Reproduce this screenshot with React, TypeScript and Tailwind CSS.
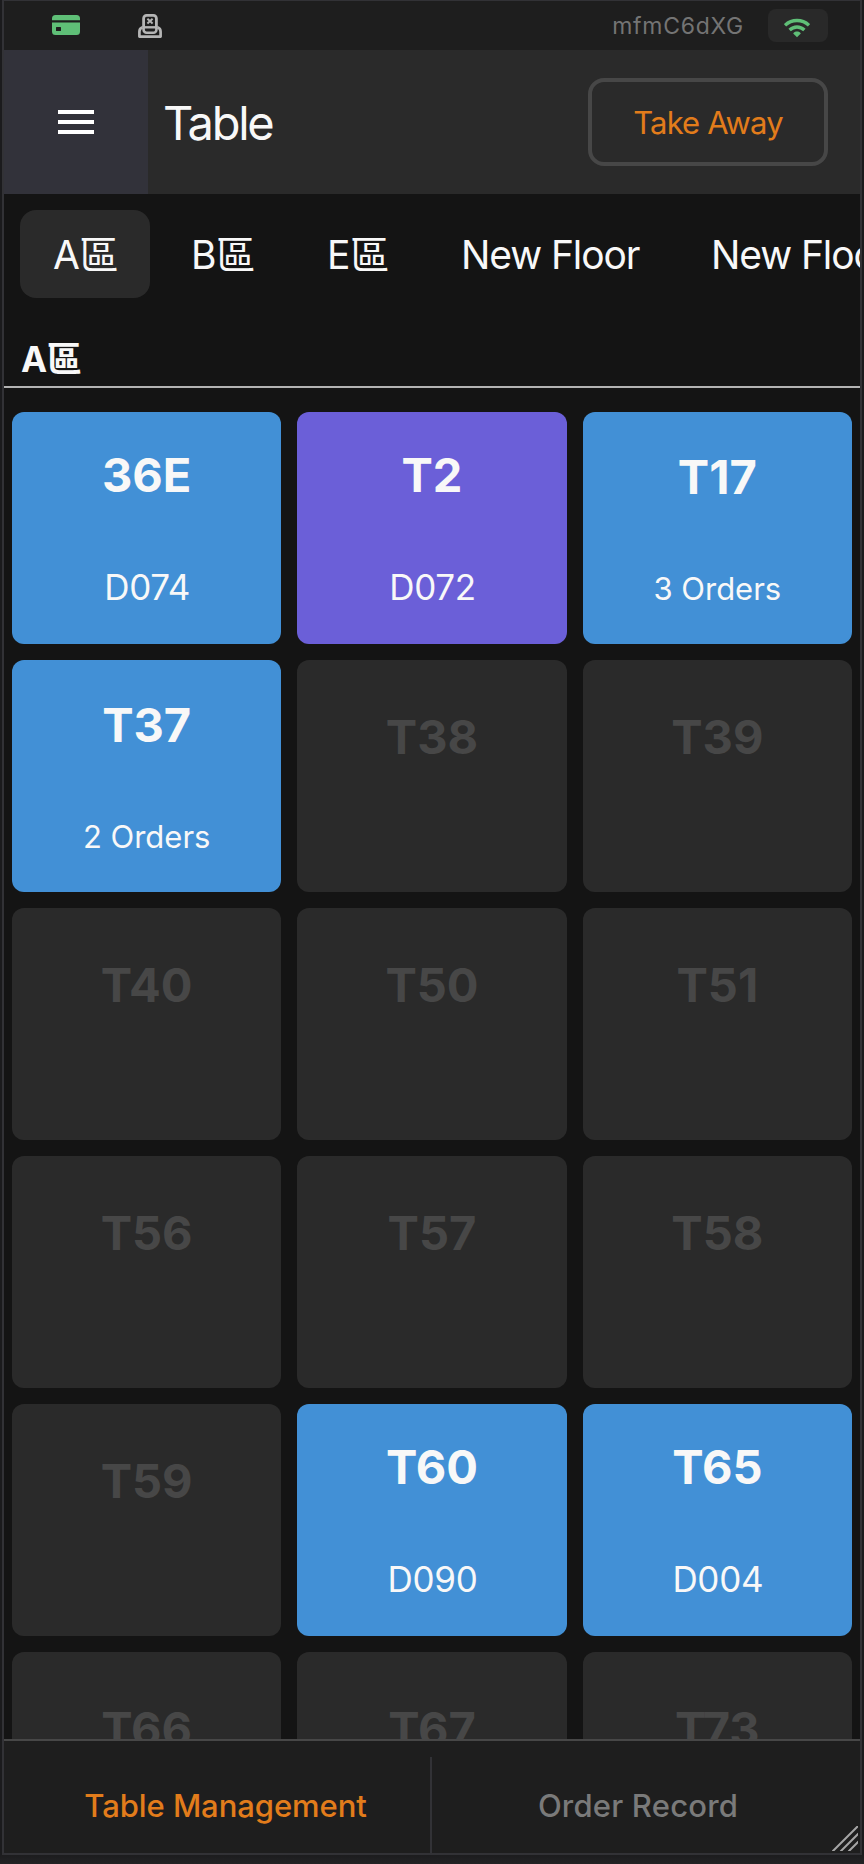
type TableCell = { name: string; detail?: string; kind?: "single" | "multi"; tone?: "blue" | "purple" };

const tables: TableCell[] = [
  { name: "36E", detail: "D074", kind: "single", tone: "blue" },
  { name: "T2", detail: "D072", kind: "single", tone: "purple" },
  { name: "T17", detail: "3 Orders", kind: "multi", tone: "blue" },
  { name: "T37", detail: "2 Orders", kind: "multi", tone: "blue" },
  { name: "T38" },
  { name: "T39" },
  { name: "T40" },
  { name: "T50" },
  { name: "T51" },
  { name: "T56" },
  { name: "T57" },
  { name: "T58" },
  { name: "T59" },
  { name: "T60", detail: "D090", kind: "single", tone: "blue" },
  { name: "T65", detail: "D004", kind: "single", tone: "blue" },
  { name: "T66" },
  { name: "T67" },
  { name: "T73" },
];

const floors = [
  { label: "A區", style: "w-[130px] tracking-[-0.300px]" },
  { label: "B區", style: "w-[128px] tracking-[-0.300px]" },
  { label: "E區", style: "w-[126px] tracking-[-0.300px]" },
  { label: "New Floor", style: "w-[242px] tracking-[-1.100px]" },
  { label: "New Floor", style: "w-[242px] tracking-[-1.100px]" },
];

function CardIcon() {
  return (
    <svg width="28" height="20" viewBox="0 0 28 20" fill="#5fbf77">
      <path d="M3.5 0h21A3.5 3.5 0 0 1 28 3.500V5.200H0V3.500A3.500 3.500 0 0 1 3.500 0Z" />
      <path
        fillRule="evenodd"
        d="M0 7.500H28V16.500A3.500 3.500 0 0 1 24.500 20H3.500A3.500 3.500 0 0 1 0 16.500ZM4.600 12h3.800a.6.6 0 0 1 .6.6v2.800a.6.6 0 0 1-.6.6H4.600a.6.6 0 0 1-.6-.6v-2.800a.6.6 0 0 1 .6-.6Z"
      />
    </svg>
  );
}

function PrinterIcon() {
  return (
    <svg width="24" height="24" viewBox="0 0 24 24" fill="none" stroke="#b5b5b5" strokeWidth="2.800" strokeLinejoin="round">
      <path d="M5.600 12.900V4.400a3 3 0 0 1 3-3h6.800a3 3 0 0 1 3 3v8.500" />
      <path d="M4.400 13.300h15.200" strokeWidth="2.400" />
      <path d="M5.600 13.500v2.200a3 3 0 0 0 3 3h6.800a3 3 0 0 0 3-3v-2.200" strokeWidth="2.600" />
      <path d="M4.500 13.300c-2 .7-3.100 2.200-3.100 4.400v4.900h21.200v-4.900c0-2.200-1.100-3.700-3.100-4.400" strokeWidth="2.700" />
      <path d="M9.400 4.700l5.200 4.800M14.600 4.700l-5.200 4.800" strokeWidth="1.900" />
    </svg>
  );
}

function WifiIcon() {
  return (
    <svg width="26" height="20" viewBox="0 0 26 20" fill="none" stroke="#5fbf77" strokeWidth="3.400">
      <path d="M1 7.300C7.800.9 18.200.9 25 7.300" />
      <path d="M5.600 12.100C10 8 16 8 20.400 12.100" />
      <path d="M9.200 15.400c1.600-2.500 6-2.500 7.600 0L13 19.300Z" fill="#5fbf77" stroke="none" />
    </svg>
  );
}

function TableCard({ name, detail, kind, tone }: TableCell) {
  if (!detail) {
    return (
      <div className="flex h-[232px] flex-col items-center rounded-xl bg-[#2a2a2a] pt-[53px]">
        <span className="text-[47px] leading-[48px] font-bold text-[#474747]">{name}</span>
      </div>
    );
  }
  const multi = kind === "multi";
  return (
    <div
      className={`flex h-[232px] flex-col items-center rounded-xl text-[#f8f8f8] ${tone === "purple" ? "bg-[#6b5fd8]" : "bg-[#4290d6]"} ${multi ? "pt-[41px]" : "pt-[39px]"}`}
    >
      <span className="text-[47px] leading-[48px] font-bold">{name}</span>
      {multi ? (
        <span className="mt-[72px] text-[31px] leading-8">{detail}</span>
      ) : (
        <span className="mt-[70px] pl-px text-[35px] leading-9 tracking-[-0.300px]">{detail}</span>
      )}
    </div>
  );
}

export default function App() {
  return (
    <div className="h-[1864px] w-[864px] overflow-hidden bg-linear-to-b from-[#1b1b1d] from-[99.4%] to-[#232325] pr-[2px] pl-[2px] font-['Inter','Noto_Sans_CJK_TC',sans-serif]">
      <div className="relative flex h-[1855px] w-[860px] flex-col overflow-hidden border-x-2 border-t border-b-2 border-[#323236] bg-[#141414]">
        <div className="flex h-[49px] shrink-0 items-center bg-[#1e1e1e] pr-8 pl-12">
          <div className="pb-px">
            <CardIcon />
          </div>
          <div className="ml-[58px]">
            <PrinterIcon />
          </div>
          <span className="ml-auto text-[23px] leading-6 tracking-[0.730px] text-[#747474]">mfmC6dXG</span>
          <div className="ml-6 flex h-[33px] w-[60px] items-center justify-center rounded-lg bg-[#292929] pt-1 pr-0.5">
            <WifiIcon />
          </div>
        </div>

        <header className="flex h-36 shrink-0 items-center bg-[#2a2a2a] pr-8">
          <button className="flex h-36 w-36 flex-col items-center justify-center gap-1.5 bg-[#32323a]">
            <span className="h-1 w-9 bg-white" />
            <span className="h-1 w-9 bg-white" />
            <span className="h-1 w-9 bg-white" />
          </button>
          <h1 className="mt-px ml-[15px] text-[47px] leading-[48px] tracking-[-2.300px] text-[#f8f8f8]">Table</h1>
          <button className="ml-auto flex h-[88px] w-60 items-center justify-center rounded-2xl border-4 border-[#474747] pt-px text-[31px] leading-8 tracking-[-0.860px] text-[#e27c1b]">
            Take Away
          </button>
        </header>

        <nav className="flex h-[120px] w-full shrink-0 gap-2 overflow-hidden pt-4 pl-4">
          {floors.map((floor, i) => (
            <button
              key={i}
              className={`flex h-[88px] shrink-0 items-center rounded-2xl pt-0.5 pl-[33px] text-[39px] leading-10 whitespace-nowrap text-[#f8f8f8] ${floor.style} ${i === 0 ? "bg-[#2a2a2a]" : ""}`}
            >
              {floor.label}
            </button>
          ))}
        </nav>

        <div className="flex h-[74px] shrink-0 items-end border-b-2 border-[#b3b3b3] pb-[9px] pl-[17px]">
          <h2 className="text-[35px] leading-9 font-bold tracking-[-0.500px] text-[#f8f8f8]">A區</h2>
        </div>

        <main className="min-h-0 flex-1 overflow-hidden px-2 pt-6">
          <div className="grid grid-cols-3 gap-4">
            {tables.map((table) => (
              <TableCard key={table.name} {...table} />
            ))}
          </div>
        </main>

        <footer className="flex h-[114px] shrink-0 border-t-2 border-[#474747] bg-[#1e1e1e] pt-[16px] text-[31px] leading-8 font-medium">
          <button className="flex w-[428px] items-center justify-center border-r-2 border-[#323236] pt-0.5 pl-[17px] text-[#e27c1b]">
            <span className="tracking-[-0.070px]">Table Management</span>
          </button>
          <button className="flex flex-1 items-center justify-center pt-0.5 pr-4 text-[#7a7a7a]">
            <span className="tracking-[0.200px]">Order Record</span>
          </button>
        </footer>

        <svg className="absolute right-[2px] bottom-[2px]" width="26" height="25" viewBox="0 0 26 25" fill="none" stroke="#a5a5a5" strokeWidth="2">
          <path d="M.5 25.500L26.500-.5M8.500 25.500l18-18M16.500 25.500l10-10" />
        </svg>
      </div>
    </div>
  );
}
